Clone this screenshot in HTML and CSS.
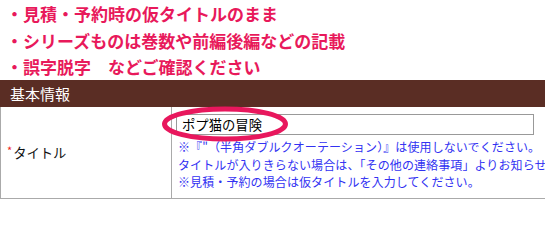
FILE: index.html
```html
<!DOCTYPE html>
<html lang="ja">
<head>
<meta charset="utf-8">
<link rel="stylesheet" href="styles.css">
</head>
<body>
<div class="page">
  <ul class="notes">
    <li>・見積・予約時の仮タイトルのまま</li>
    <li>・シリーズものは巻数や前編後編などの記載</li>
    <li>・誤字脱字　などご確認ください</li>
  </ul>
  <div class="section-head">基本情報</div>
  <div class="row">
    <div class="label"><span class="req">*</span>タイトル</div>
    <div class="field">
      <div class="input">ポプ猫の冒険</div>
      <p class="help">※『"（半角ダブルクオーテーション）』は使用しないでください。<br>タイトルが入りきらない場合は、「その他の連絡事項」よりお知らせください。<br>※見積・予約の場合は仮タイトルを入力してください。</p>
    </div>
  </div>
  <svg class="circle" width="140" height="44" viewBox="0 0 140 44">
    <ellipse cx="70" cy="22" rx="60.5" ry="15" fill="none" stroke="#e8175d" stroke-width="5"/>
  </svg>
</div>
</body>
</html>
```
FILE: styles.css
```css
html, body {
  margin: 0;
  padding: 0;
  background: #fff;
  overflow: hidden;
}
.page {
  position: relative;
  width: 545px;
  height: 200px;
  overflow: hidden;
  font-family: "Noto Sans CJK JP", "Noto Sans", sans-serif;
}
.notes {
  list-style: none;
  margin: 0;
  padding: 1px 0 0 6px;
  height: 79px;
  font-size: 17px;
  font-weight: bold;
  line-height: 26.5px;
  color: #e8195b;
}
.notes li {
  margin: 0;
  white-space: nowrap;
}
.section-head {
  height: 27px;
  line-height: 27px;
  background: #5a2d24;
  color: #fff;
  font-size: 15px;
  padding-left: 10px;
}
.row {
  display: grid;
  grid-template-columns: 172px 1fr;
  width: 800px;
}
.label {
  display: flex;
  align-items: center;
  border-left: 1px solid #aaa;
  border-right: 1px solid #aaa;
  border-bottom: 1px solid #aaa;
  padding-left: 6px;
  font-size: 13.33px;
  color: #111;
}
.req {
  color: #e22;
  font-size: 11px;
  margin-top: -5px;
  margin-right: 1px;
}
.field {
  border-bottom: 1px solid #aaa;
  padding: 7px 0 7px 4px;
}
.input {
  width: 351px;
  height: 19px;
  border: 1px solid #999;
  padding: 0 0 0 5px;
  font-size: 13.33px;
  line-height: 19px;
  color: #000;
}
.help {
  margin: 3px 0 0 2px;
  font-size: 12px;
  line-height: 17.5px;
  letter-spacing: 0.1px;
  color: #3232f2;
  white-space: nowrap;
}
.circle {
  position: absolute;
  left: 155px;
  top: 102px;
}
```
